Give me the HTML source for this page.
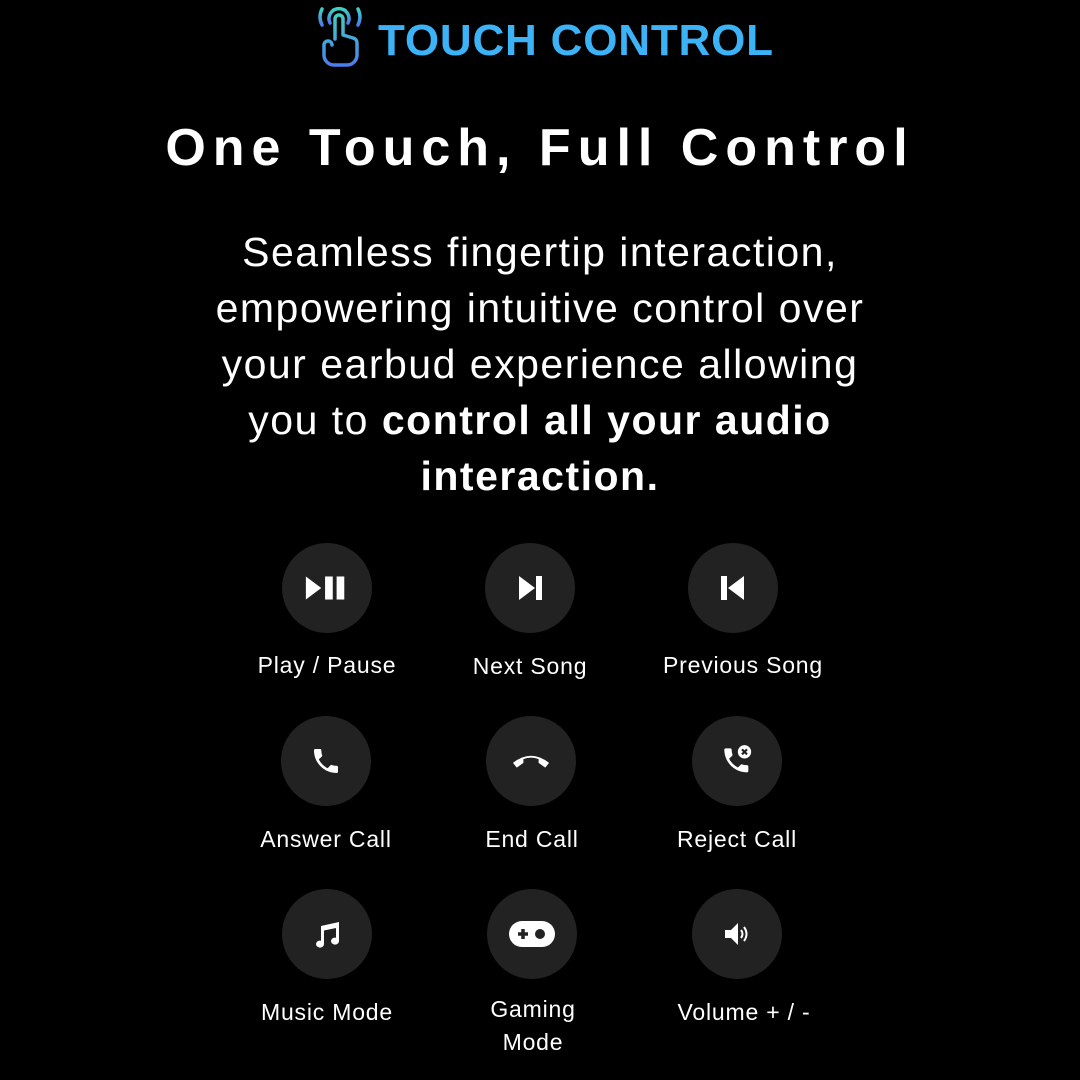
<!DOCTYPE html>
<html><head><meta charset="utf-8"><style>
*{margin:0;padding:0;box-sizing:border-box}
body{width:1080px;height:1080px;background:#000;color:#fff;font-family:"Liberation Sans",sans-serif;position:relative;overflow:hidden}
.abs{position:absolute}
.logo{left:378px;top:16px;font-size:44px;font-weight:bold;color:#3cb2f7;letter-spacing:0.8px;white-space:nowrap}
.title{left:0;width:1080px;top:118px;text-align:center;font-size:52px;font-weight:bold;letter-spacing:7px}
.para{left:40px;width:1000px;top:224px;text-align:center;font-size:41px;line-height:56px;letter-spacing:1.5px;white-space:nowrap}
.c{width:90px;height:90px;border-radius:50%;background:#222;display:flex;align-items:center;justify-content:center}
.l{width:260px;text-align:center;font-size:23px;line-height:33px;letter-spacing:0.8px}
</style></head><body>
<svg class="abs" style="left:314px;top:3px" width="52" height="64" viewBox="0 0 52 64">
<defs><linearGradient id="g" x1="0" y1="0" x2="0" y2="1"><stop offset="0" stop-color="#3fd0c0"/><stop offset="1" stop-color="#4a7ef0"/></linearGradient></defs>
<g fill="none" stroke="url(#g)" stroke-width="3.5" stroke-linecap="round" stroke-linejoin="round">
<path d="M8 22 A18 18 0 0 1 8 6"/><path d="M44 22 A18 18 0 0 0 44 6"/>
<path d="M16 20 A10 10 0 1 1 34 20"/>
<path d="M21 36 V16 a4 4 0 0 1 8 0 V32 l10 3 a5 5 0 0 1 4 5 V52 a10 10 0 0 1 -10 10 H20 a10 10 0 0 1 -10 -10 V42 a4 4 0 0 1 8 0"/>
</g></svg>
<div class="abs logo">TOUCH CONTROL</div>
<div class="abs title">One Touch, Full Control</div>
<div class="abs para">Seamless fingertip interaction,<br>empowering intuitive control over<br>your earbud experience allowing<br>you to <b>control all your audio<br>interaction.</b></div>

<div class="abs c" style="left:282px;top:543px"><svg width="48" height="30" viewBox="0 0 50 30"><path d="M3 3 L19 15 L3 27Z" fill="#fff"/><rect x="23" y="3" width="8" height="24" fill="#fff"/><rect x="35" y="3" width="8" height="24" fill="#fff"/></svg></div>
<div class="abs c" style="left:485px;top:543px"><svg width="30" height="30" viewBox="0 0 30 30"><path d="M4 3 L20 15 L4 27Z" fill="#fff"/><rect x="21" y="3" width="6" height="24" fill="#fff"/></svg></div>
<div class="abs c" style="left:688px;top:543px"><svg width="30" height="30" viewBox="0 0 30 30"><rect x="3" y="3" width="6" height="24" fill="#fff"/><path d="M26 3 L10 15 L26 27Z" fill="#fff"/></svg></div>
<div class="abs l" style="left:197px;top:649px">Play / Pause</div>
<div class="abs l" style="left:400px;top:650px">Next Song</div>
<div class="abs l" style="left:613px;top:649px">Previous Song</div>

<div class="abs c" style="left:281px;top:716px"><svg width="32" height="32" viewBox="0 0 24 24"><path fill="#fff" d="M6.6 10.8c1.4 2.8 3.8 5.1 6.6 6.6l2.2-2.2c.3-.3.7-.4 1-.2 1.1.4 2.3.6 3.6.6.6 0 1 .4 1 1V20c0 .6-.4 1-1 1C10.6 21 3 13.4 3 4c0-.6.4-1 1-1h3.5c.6 0 1 .4 1 1 0 1.3.2 2.5.6 3.6.1.3 0 .7-.2 1z"/></svg></div>
<div class="abs c" style="left:486px;top:716px"><svg width="38" height="20" viewBox="0 0 40 20"><path fill="#fff" d="M1 12 Q20 -3 39 12 L35 17 L28 12 L28 8 Q20 5 12 8 L12 12 L5 17Z"/></svg></div>
<div class="abs c" style="left:692px;top:716px"><svg width="40" height="40" viewBox="0 0 24 24"><path fill="#fff" d="M6.6 10.8c1.4 2.8 3.8 5.1 6.6 6.6l2.2-2.2c.3-.3.7-.4 1-.2 1.1.4 2.3.6 3.6.6.6 0 1 .4 1 1V20c0 .6-.4 1-1 1C10.6 21 3 13.4 3 4c0-.6.4-1 1-1h3.5c.6 0 1 .4 1 1 0 1.3.2 2.5.6 3.6.1.3 0 .7-.2 1z" transform="translate(2 2) scale(.8)"/><circle cx="16.5" cy="6.5" r="4" fill="#fff"/><path d="M15 5l3 3M18 5l-3 3" stroke="#222" stroke-width="1.3"/></svg></div>
<div class="abs l" style="left:196px;top:823px">Answer Call</div>
<div class="abs l" style="left:402px;top:823px">End Call</div>
<div class="abs l" style="left:607px;top:823px">Reject Call</div>

<div class="abs c" style="left:282px;top:889px"><svg width="30" height="30" viewBox="0 0 30 30"><path fill="#fff" d="M9 7 L27 3 V22 a4 3.5 0 1 1 -3 -3.3 V9 L12 11.5 V25 a4 3.5 0 1 1 -3 -3.3Z"/></svg></div>
<div class="abs c" style="left:487px;top:889px"><svg width="48" height="28" viewBox="0 0 48 28"><rect x="1" y="1" width="46" height="26" rx="13" fill="#fff"/><path d="M10 14h10M15 9v10" stroke="#222" stroke-width="3.5"/><circle cx="32" cy="14" r="5" fill="#222"/></svg></div>
<div class="abs c" style="left:692px;top:889px"><svg width="30" height="30" viewBox="0 0 30 30"><path fill="#fff" d="M3 11h6l7-7v22l-7-7H3z"/><path d="M19 11 q3 4 0 8M22 8 q5 7 0 14" stroke="#fff" stroke-width="2" fill="none"/></svg></div>
<div class="abs l" style="left:197px;top:996px">Music Mode</div>
<div class="abs l" style="left:403px;top:993px">Gaming<br>Mode</div>
<div class="abs l" style="left:614px;top:996px">Volume + / -</div>
</body></html>
